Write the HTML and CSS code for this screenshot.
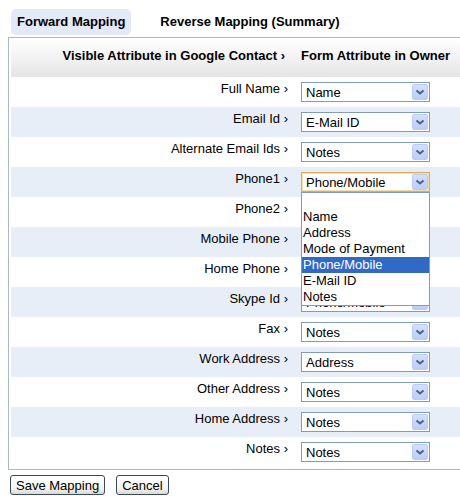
FILE: index.html
```html
<!DOCTYPE html>
<html lang="en">
<head>
	<meta charset="UTF-8">
	<title>Field Mapping</title>
	<link rel="stylesheet" href="styles.css">
</head>
<body>
	<div class="tabs">
		<span class="tab active">Forward Mapping</span>
		<span class="tab">Reverse Mapping (Summary)</span>
	</div>

	<div class="panel">
		<div class="head">
			<div class="col-a">Visible Attribute in Google Contact <span class="sep">&rsaquo;</span></div>
			<div class="col-b">Form Attribute in Owner</div>
		</div>

		<div class="row">
			<div class="label">Full Name <span class="sep">&rsaquo;</span></div>
			<div class="field"><div class="select"><span class="value">Name</span><span class="arrow"><svg width="16" height="16" viewBox="0 0 16 16"><path d="M4.5 6.5 L8 9.5 L11.5 6.5" fill="none" stroke="#4d6185" stroke-width="2"/></svg></span></div></div>
		</div>
		<div class="row alt">
			<div class="label">Email Id <span class="sep">&rsaquo;</span></div>
			<div class="field"><div class="select"><span class="value">E-Mail ID</span><span class="arrow"><svg width="16" height="16" viewBox="0 0 16 16"><path d="M4.5 6.5 L8 9.5 L11.5 6.5" fill="none" stroke="#4d6185" stroke-width="2"/></svg></span></div></div>
		</div>
		<div class="row">
			<div class="label">Alternate Email Ids <span class="sep">&rsaquo;</span></div>
			<div class="field"><div class="select"><span class="value">Notes</span><span class="arrow"><svg width="16" height="16" viewBox="0 0 16 16"><path d="M4.5 6.5 L8 9.5 L11.5 6.5" fill="none" stroke="#4d6185" stroke-width="2"/></svg></span></div></div>
		</div>
		<div class="row alt">
			<div class="label">Phone1 <span class="sep">&rsaquo;</span></div>
			<div class="field">
				<div class="select open">
					<span class="value">Phone/Mobile</span><span class="arrow"><svg width="16" height="16" viewBox="0 0 16 16"><path d="M4.5 6.5 L8 9.5 L11.5 6.5" fill="none" stroke="#4d6185" stroke-width="2"/></svg></span>
					<ul class="options">
						<li>&nbsp;</li>
						<li>Name</li>
						<li>Address</li>
						<li>Mode of Payment</li>
						<li class="selected">Phone/Mobile</li>
						<li>E-Mail ID</li>
						<li>Notes</li>
					</ul>
				</div>
			</div>
		</div>
		<div class="row">
			<div class="label">Phone2 <span class="sep">&rsaquo;</span></div>
			<div class="field"><div class="select"><span class="value">Notes</span><span class="arrow"><svg width="16" height="16" viewBox="0 0 16 16"><path d="M4.5 6.5 L8 9.5 L11.5 6.5" fill="none" stroke="#4d6185" stroke-width="2"/></svg></span></div></div>
		</div>
		<div class="row alt">
			<div class="label">Mobile Phone <span class="sep">&rsaquo;</span></div>
			<div class="field"><div class="select"><span class="value">Phone/Mobile</span><span class="arrow"><svg width="16" height="16" viewBox="0 0 16 16"><path d="M4.5 6.5 L8 9.5 L11.5 6.5" fill="none" stroke="#4d6185" stroke-width="2"/></svg></span></div></div>
		</div>
		<div class="row">
			<div class="label">Home Phone <span class="sep">&rsaquo;</span></div>
			<div class="field"><div class="select"><span class="value">Notes</span><span class="arrow"><svg width="16" height="16" viewBox="0 0 16 16"><path d="M4.5 6.5 L8 9.5 L11.5 6.5" fill="none" stroke="#4d6185" stroke-width="2"/></svg></span></div></div>
		</div>
		<div class="row alt">
			<div class="label">Skype Id <span class="sep">&rsaquo;</span></div>
			<div class="field"><div class="select"><span class="value">Phone/Mobile</span><span class="arrow"><svg width="16" height="16" viewBox="0 0 16 16"><path d="M4.5 6.5 L8 9.5 L11.5 6.5" fill="none" stroke="#4d6185" stroke-width="2"/></svg></span></div></div>
		</div>
		<div class="row">
			<div class="label">Fax <span class="sep">&rsaquo;</span></div>
			<div class="field"><div class="select"><span class="value">Notes</span><span class="arrow"><svg width="16" height="16" viewBox="0 0 16 16"><path d="M4.5 6.5 L8 9.5 L11.5 6.5" fill="none" stroke="#4d6185" stroke-width="2"/></svg></span></div></div>
		</div>
		<div class="row alt">
			<div class="label">Work Address <span class="sep">&rsaquo;</span></div>
			<div class="field"><div class="select"><span class="value">Address</span><span class="arrow"><svg width="16" height="16" viewBox="0 0 16 16"><path d="M4.5 6.5 L8 9.5 L11.5 6.5" fill="none" stroke="#4d6185" stroke-width="2"/></svg></span></div></div>
		</div>
		<div class="row">
			<div class="label">Other Address <span class="sep">&rsaquo;</span></div>
			<div class="field"><div class="select"><span class="value">Notes</span><span class="arrow"><svg width="16" height="16" viewBox="0 0 16 16"><path d="M4.5 6.5 L8 9.5 L11.5 6.5" fill="none" stroke="#4d6185" stroke-width="2"/></svg></span></div></div>
		</div>
		<div class="row alt">
			<div class="label">Home Address <span class="sep">&rsaquo;</span></div>
			<div class="field"><div class="select"><span class="value">Notes</span><span class="arrow"><svg width="16" height="16" viewBox="0 0 16 16"><path d="M4.5 6.5 L8 9.5 L11.5 6.5" fill="none" stroke="#4d6185" stroke-width="2"/></svg></span></div></div>
		</div>
		<div class="row">
			<div class="label">Notes <span class="sep">&rsaquo;</span></div>
			<div class="field"><div class="select"><span class="value">Notes</span><span class="arrow"><svg width="16" height="16" viewBox="0 0 16 16"><path d="M4.5 6.5 L8 9.5 L11.5 6.5" fill="none" stroke="#4d6185" stroke-width="2"/></svg></span></div></div>
		</div>
	</div>

	<div class="actions">
		<button class="btn">Save Mapping</button>
		<button class="btn">Cancel</button>
	</div>
</body>
</html>
```

FILE: styles.css
```css
*{
	margin: 0;
	padding: 0;
	box-sizing: border-box;
}
ul,li{
	list-style: none;
}
body{
	font-family: "Liberation Sans", Arial, sans-serif;
	font-size: 13px;
	color: #000000;
	background: #ffffff;
}
/*tabs*/
.tabs{
	display: flex;
	gap: 23px;
	margin-top: 9px;
	padding-left: 11px;
}
.tab{
	display: block;
	padding: 5px 6px;
	line-height: 16px;
	font-weight: bold;
	border-radius: 5px;
}
.tab.active{
	background: #e3e9f7;
}
/*panel*/
.panel{
	margin: 2px 0 0 8px;
	border: 1px solid #a9b7c9;
	border-right: none;
	padding: 0 0 2px 2px;
}
.head,
.row{
	display: grid;
	grid-template-columns: 279px 1fr;
}
.head{
	height: 39px;
	padding-top: 10px;
	line-height: 15px;
	font-weight: bold;
	background: linear-gradient(#ffffff, #f3f3f3 50%, #e4e4e4);
}
.head .col-a{
	text-align: right;
	padding-right: 5px;
}
.head .col-b{
	padding-left: 11px;
}
.row{
	height: 30px;
}
.row.alt{
	background: #e8eef8;
}
.label{
	text-align: right;
	padding: 4px 2px 0 0;
	line-height: 15px;
}
.field{
	padding: 5px 0 0 11px;
}
/*fake select box*/
.select{
	position: relative;
	display: flex;
	width: 129px;
	height: 20px;
	border: 1px solid #7f9db9;
	background: #ffffff;
}
.select .value{
	flex: 1;
	padding-left: 4px;
	line-height: 19px;
	white-space: nowrap;
	overflow: hidden;
}
.select .arrow{
	width: 16px;
	height: 16px;
	margin: 1px 1px 1px 0;
	border: 1px solid #bccdf5;
	border-radius: 2px;
	background: linear-gradient(#d3e0fd, #bccdf8);
}
.select .arrow svg{
	display: block;
	margin: -1px;
}
.select.open{
	border-color: #d9ae5c;
	box-shadow: inset 0 0 0 1px #f4dca6;
}
/*open list*/
.options{
	position: absolute;
	left: -1px;
	top: calc(100% + 1px);
	width: 129px;
	border: 1px solid #7f9db9;
	background: #ffffff;
	z-index: 5;
}
.options li{
	height: 16px;
	line-height: 16px;
	padding-left: 1px;
	white-space: nowrap;
}
.options li.selected{
	background: #316ac5;
	color: #ffffff;
}
/*buttons*/
.actions{
	display: flex;
	gap: 11px;
	margin: 5px 0 0 10px;
}
.btn{
	font-family: "Liberation Sans", Arial, sans-serif;
	font-size: 13px;
	height: 20px;
	line-height: 17px;
	padding: 0 5px;
	color: #000000;
	border: 1px solid #3a4a5e;
	border-radius: 3px;
	background: linear-gradient(#ffffff, #f4f4f0 70%, #dcd8cf);
}
```
